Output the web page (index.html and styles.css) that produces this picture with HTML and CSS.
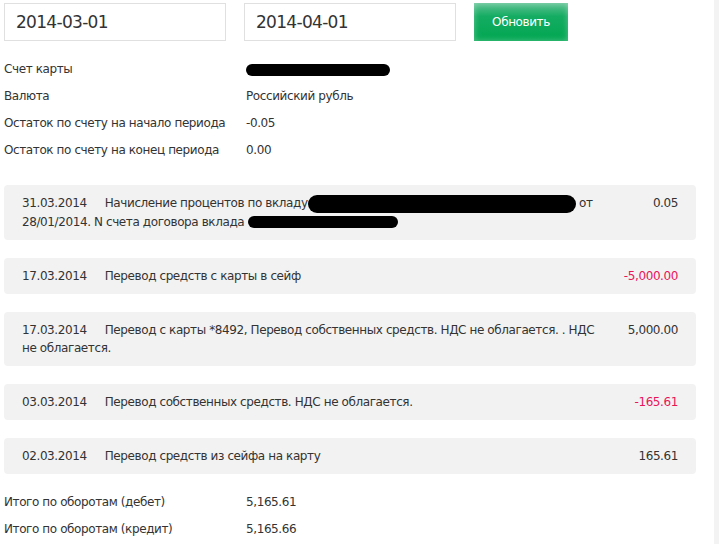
FILE: index.html
```html
<!DOCTYPE html>
<html lang="ru">
<head>
<meta charset="utf-8">
<title>Выписка</title>
<link rel="stylesheet" href="styles.css">
</head>
<body>
<div class="page">
  <form class="filters">
    <input class="date-input date-from" type="text" value="2014-03-01">
    <input class="date-input date-to" type="text" value="2014-04-01">
    <button class="btn-refresh" type="button">Обновить</button>
  </form>

  <div class="info">
    <div class="info-row"><span class="info-label">Счет карты</span><span class="info-value"><span class="redact redact-card"></span></span></div>
    <div class="info-row"><span class="info-label">Валюта</span><span class="info-value">Российский рубль</span></div>
    <div class="info-row"><span class="info-label">Остаток по счету на начало периода</span><span class="info-value">-0.05</span></div>
    <div class="info-row"><span class="info-label">Остаток по счету на конец периода</span><span class="info-value">0.00</span></div>
  </div>

  <div class="ops">
    <div class="op">
      <div class="op-amount">0.05</div>
      <div class="op-text"><span class="op-date">31.03.2014</span>Начисление процентов по вкладу<span class="redact redact-a"></span> от<br>28/01/2014. N счета договора вклада <span class="redact redact-b"></span></div>
    </div>
    <div class="op">
      <div class="op-amount neg">-5,000.00</div>
      <div class="op-text"><span class="op-date">17.03.2014</span>Перевод средств с карты в сейф</div>
    </div>
    <div class="op">
      <div class="op-amount">5,000.00</div>
      <div class="op-text"><span class="op-date">17.03.2014</span>Перевод с карты *8492, Перевод собственных средств. НДС не облагается. . НДС<br>не облагается.</div>
    </div>
    <div class="op">
      <div class="op-amount neg">-165.61</div>
      <div class="op-text"><span class="op-date">03.03.2014</span>Перевод собственных средств. НДС не облагается.</div>
    </div>
    <div class="op">
      <div class="op-amount">165.61</div>
      <div class="op-text"><span class="op-date">02.03.2014</span>Перевод средств из сейфа на карту</div>
    </div>
  </div>

  <div class="info totals">
    <div class="info-row"><span class="info-label">Итого по оборотам (дебет)</span><span class="info-value">5,165.61</span></div>
    <div class="info-row"><span class="info-label">Итого по оборотам (кредит)</span><span class="info-value">5,165.66</span></div>
  </div>
</div>
<div class="side-strip"></div>
</body>
</html>
```

FILE: styles.css
```css
html, body {
  margin: 0;
  padding: 0;
  background: #fff;
}
body {
  font-family: "DejaVu Sans", Verdana, sans-serif;
  font-size: 12px;
  letter-spacing: -0.4px;
  color: #333;
  display: flex;
  min-height: 544px;
}
.page {
  width: 692px;
  padding: 3px 0 0 4px;
}
.side-strip {
  margin-left: auto;
  width: 5px;
  background: #f3f3f3;
}
.filters {
  display: flex;
  gap: 18px;
  margin: 0;
}
.date-input {
  box-sizing: border-box;
  height: 38px;
  border: 1px solid #e0e0e0;
  padding: 0 0 0 11px;
  font-family: "DejaVu Sans", Verdana, sans-serif;
  font-size: 17px;
  letter-spacing: -0.7px;
  color: #333;
  background: #fff;
  outline: none;
}
.date-from { width: 222px; }
.date-to { width: 212px; }
.btn-refresh {
  box-sizing: border-box;
  width: 94px;
  height: 38px;
  border: 0;
  color: #fff;
  font-family: "DejaVu Sans", Verdana, sans-serif;
  font-size: 12px;
  letter-spacing: -0.4px;
  background: linear-gradient(#5fc293 0%, #14ac62 35%, #00a651 100%);
  box-shadow: inset 0 0 6px rgba(255,255,255,0.35);
}
.info {
  margin-top: 15px;
}
.info-row {
  display: flex;
  height: 27px;
  line-height: 27px;
}
.info-label {
  width: 242px;
  flex-shrink: 0;
}
.info-value {
  display: flex;
  align-items: center;
}
.redact {
  display: inline-block;
  background: #000;
  border-radius: 7px;
  vertical-align: middle;
}
.redact-card {
  width: 144px;
  height: 12px;
}
.ops {
  margin-top: 21px;
  display: flex;
  flex-direction: column;
  gap: 18px;
}
.op {
  background: #f2f2f2;
  border-radius: 4px;
  padding: 9px 18px;
  line-height: 18px;
}
.op-amount {
  float: right;
  width: 70px;
  text-align: right;
}
.op-amount.neg {
  color: #ea1459;
}
.op-date {
  margin-right: 18px;
}
.redact-a {
  width: 268px;
  height: 18px;
  border-radius: 9px;
}
.redact-b {
  width: 150px;
  height: 12px;
}
.totals {
  margin-top: 15px;
}
```
